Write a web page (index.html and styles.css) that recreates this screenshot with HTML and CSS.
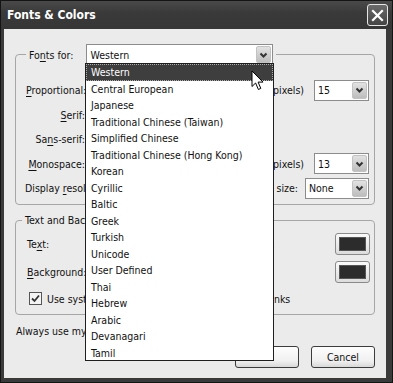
FILE: index.html
```html
<!DOCTYPE html>
<html lang="en">
<head>
    <meta charset="UTF-8">
    <title>Fonts &amp; Colors</title>
    <link rel="stylesheet" href="styles.css">
</head>
<body>

<div class="window">
    <div class="titlebar">
        <span class="title">Fonts &amp; Colors</span>
        <span class="close">
            <svg width="13" height="13" viewBox="0 0 13 13"><path d="M2 2 L11 11 M11 2 L2 11" stroke="#fff" stroke-width="2.2" stroke-linecap="square"/></svg>
        </span>
    </div>

    <div class="dialog-body">
        <fieldset class="group fonts-group">
            <legend class="fonts-legend">
                <span>Fo<u>n</u>ts for:</span>
                <div class="select lang-select">
                    <span class="value">Western</span>
                    <span class="arrow"><svg width="9" height="6" viewBox="0 0 9 6"><path d="M1.5 1.5 L4.5 4.5 L7.5 1.5" fill="none" stroke="#333" stroke-width="2"/></svg></span>
                </div>
            </legend>
            <div class="font-rows">
                <div class="font-row">
                    <span class="row-label"><u>P</u>roportional:</span>
                    <div class="select font-select"></div>
                    <span class="size-label">Si<u>z</u>e (pixels)</span>
                    <div class="select size-select">
                        <span class="value">15</span>
                        <span class="arrow"><svg width="9" height="6" viewBox="0 0 9 6"><path d="M1.5 1.5 L4.5 4.5 L7.5 1.5" fill="none" stroke="#333" stroke-width="2"/></svg></span>
                    </div>
                </div>
                <div class="font-row">
                    <span class="row-label"><u>S</u>erif:</span>
                    <div class="select font-select"></div>
                </div>
                <div class="font-row">
                    <span class="row-label">Sa<u>n</u>s-serif:</span>
                    <div class="select font-select"></div>
                </div>
                <div class="font-row">
                    <span class="row-label"><u>M</u>onospace:</span>
                    <div class="select font-select"></div>
                    <span class="size-label">Si<u>z</u>e (pixels)</span>
                    <div class="select size-select">
                        <span class="value">13</span>
                        <span class="arrow"><svg width="9" height="6" viewBox="0 0 9 6"><path d="M1.5 1.5 L4.5 4.5 L7.5 1.5" fill="none" stroke="#333" stroke-width="2"/></svg></span>
                    </div>
                </div>
                <div class="font-row">
                    <span class="wide-label">Display <u>r</u>esolution:</span>
                    <div class="select font-select short"></div>
                    <span class="size-label">Minimum font size:</span>
                    <div class="select min-size-select">
                        <span class="value">None</span>
                        <span class="arrow"><svg width="9" height="6" viewBox="0 0 9 6"><path d="M1.5 1.5 L4.5 4.5 L7.5 1.5" fill="none" stroke="#333" stroke-width="2"/></svg></span>
                    </div>
                </div>
            </div>
        </fieldset>

        <fieldset class="group colors-group">
            <legend class="colors-legend">Text and Background Colors</legend>
            <div class="color-grid">
                <div class="color-cell">
                    <span>Te<u>x</u>t:</span>
                    <span class="swatch"><span class="swatch-fill"></span></span>
                </div>
                <div class="color-cell">
                    <span><u>U</u>nvisited Links:</span>
                    <span class="swatch"><span class="swatch-fill"></span></span>
                </div>
                <div class="color-cell">
                    <span><u>B</u>ackground:</span>
                    <span class="swatch"><span class="swatch-fill"></span></span>
                </div>
                <div class="color-cell">
                    <span></span>
                    <span class="swatch"><span class="swatch-fill"></span></span>
                </div>
                <label class="check-cell">
                    <span class="checkbox checked">
                        <svg width="9" height="9" viewBox="0 0 9 9"><path d="M1 4.5 L3.5 7 L8 1.5" fill="none" stroke="#333" stroke-width="1.8"/></svg>
                    </span>
                    Use system colors
                </label>
                <label class="check-cell">
                    <span class="checkbox checked">
                        <svg width="9" height="9" viewBox="0 0 9 9"><path d="M1 4.5 L3.5 7 L8 1.5" fill="none" stroke="#333" stroke-width="1.8"/></svg>
                    </span>
                    Underline links
                </label>
            </div>
        </fieldset>

        <div class="always-row">
            <span>Always use my colors, overriding the page</span>
        </div>

        <div class="buttons">
            <button class="btn">OK</button>
            <button class="btn">Cancel</button>
        </div>
    </div>

    <!-- open dropdown of the "Fonts for" select, drawn over the dialog -->
    <ul class="dropdown">
        <li class="selected">Western</li>
        <li>Central European</li>
        <li>Japanese</li>
        <li>Traditional Chinese (Taiwan)</li>
        <li>Simplified Chinese</li>
        <li>Traditional Chinese (Hong Kong)</li>
        <li>Korean</li>
        <li>Cyrillic</li>
        <li>Baltic</li>
        <li>Greek</li>
        <li>Turkish</li>
        <li>Unicode</li>
        <li>User Defined</li>
        <li>Thai</li>
        <li>Hebrew</li>
        <li>Arabic</li>
        <li>Devanagari</li>
        <li>Tamil</li>
    </ul>

    <svg class="cursor" width="14" height="22" viewBox="0 0 14 22">
        <path d="M1 1 L1 16.5 L4.6 13 L7.4 19.5 L9.8 18.4 L7.1 12.1 L12 12.1 Z" fill="#fff" stroke="#000" stroke-width="1" stroke-linejoin="miter"/>
    </svg>
</div>

</body>
</html>
```

FILE: styles.css
```css
* {
    box-sizing: border-box;
}
body {
    margin: 0;
    width: 393px;
    height: 383px;
    overflow: hidden;
    font-family: "DejaVu Sans Condensed", "DejaVu Sans", sans-serif;
    font-stretch: condensed;
    font-size: 10.5px;
    color: #111;
    background: #2a2a2a;
}
u {
    text-decoration-thickness: 1px;
    text-underline-offset: 2px;
}
.window {
    position: relative;
    width: 393px;
    height: 383px;
    display: flex;
    flex-direction: column;
    background: #3a3a3a;
    border: 1px solid #141414;
}
.titlebar {
    height: 28px;
    flex: none;
    display: flex;
    align-items: center;
    justify-content: space-between;
    padding: 0 4px 0 6px;
    background: linear-gradient(#4a4a4a, #3a3a3a 40%, #363636);
}
.title {
    color: #fff;
    font-weight: bold;
    font-size: 12px;
}
.close {
    width: 21px;
    height: 22px;
    display: flex;
    align-items: center;
    justify-content: center;
    border: 1px solid #e6e6e6;
    border-radius: 3px;
    background: linear-gradient(#6a6a6a, #444);
}
.dialog-body {
    flex: 1;
    margin: 0 6px 4px 3px;
    padding: 14px 11px 10px 11px;
    display: flex;
    flex-direction: column;
    background: #ebebeb;
    border-top: 1px solid #ebebeb;
}
.group {
    margin: 0;
    border: 1px solid #a6a6a6;
    border-radius: 4px;
    min-width: 0;
}
.fonts-group {
    padding: 0 5px 3px 10px;
}
.fonts-legend {
    display: flex;
    align-items: center;
    padding: 0 3px;
}
.select {
    flex: none;
    display: flex;
    align-items: center;
    height: 21px;
    background: #fff;
    border: 1px solid #8c8c8c;
    padding-left: 3px;
}
.select .value {
    flex: 1;
    white-space: nowrap;
}
.arrow {
    flex: none;
    width: 15px;
    height: 17px;
    margin-right: 1px;
    display: flex;
    align-items: center;
    justify-content: center;
    border: 1px solid #c2c2c2;
    border-radius: 2px;
    background: linear-gradient(#e2e2e2, #bdbdbd);
}
.lang-select {
    width: 187px;
    margin-left: 13px;
}
.font-rows {
    margin-top: 13px;
}
.font-row {
    height: 24.5px;
    display: flex;
    align-items: center;
}
.row-label {
    flex: none;
    width: 59px;
    text-align: right;
    white-space: nowrap;
}
.wide-label {
    flex: none;
    margin-left: -1px;
    white-space: nowrap;
}
.font-select {
    width: 150px;
    margin-left: 8px;
}
.font-select.short {
    width: 50px;
}
.size-label {
    flex: 1;
    text-align: right;
    white-space: nowrap;
}
.size-select {
    width: 55px;
    min-width: 55px;
    margin-left: 10px;
}
.min-size-select {
    width: 64px;
    min-width: 64px;
    margin-left: 7px;
}
.colors-group {
    margin-top: 9px;
    padding: 0 4px 0 6px;
}
.colors-legend {
    padding: 0 3px;
    line-height: 13px;
}
.color-grid {
    display: grid;
    grid-template-columns: 165px 1fr;
    grid-auto-rows: 28px;
    column-gap: 8px;
    padding: 3px 0 0 5px;
}
.color-cell {
    display: flex;
    align-items: center;
    justify-content: space-between;
}
.swatch {
    width: 35px;
    height: 22px;
    padding: 3px;
    border: 1px solid #8a8a8a;
    border-radius: 3px;
    background: linear-gradient(#fafafa, #dcdcdc);
}
.swatch-fill {
    display: block;
    height: 100%;
    background: #2c2c2c;
    border: 1px solid #555;
}
.check-cell {
    display: flex;
    align-items: center;
    gap: 5px;
    height: 26px;
    padding-left: 2px;
}
.checkbox {
    width: 13px;
    height: 13px;
    border: 1px solid #555;
    background: #f4f4f4;
    display: flex;
    align-items: center;
    justify-content: center;
}
.always-row {
    margin-top: 10px;
    margin-left: 1px;
    line-height: 13px;
}
.buttons {
    margin-top: auto;
    display: flex;
    justify-content: flex-end;
    gap: 12px;
}
.btn {
    width: 64px;
    height: 22px;
    font: inherit;
    color: #111;
    border: 1px solid #3c3c3c;
    border-radius: 3px;
    background: linear-gradient(#fdfdfd, #f0f0f0 70%, #d8d8d8);
    padding: 0;
}
.dropdown {
    position: absolute;
    left: 84px;
    top: 62px;
    width: 189px;
    height: 298px;
    margin: 0;
    padding: 0;
    list-style: none;
    background: #fff;
    border: 1px solid #1e1e1e;
}
.dropdown li {
    height: 16.5px;
    line-height: 16.5px;
    padding-left: 5px;
    white-space: nowrap;
}
.dropdown li.selected {
    background: #3e3e3e;
    color: #fff;
    outline: 1px dotted #aaa;
    outline-offset: -1px;
}
.cursor {
    position: absolute;
    left: 250px;
    top: 69px;
}
```
